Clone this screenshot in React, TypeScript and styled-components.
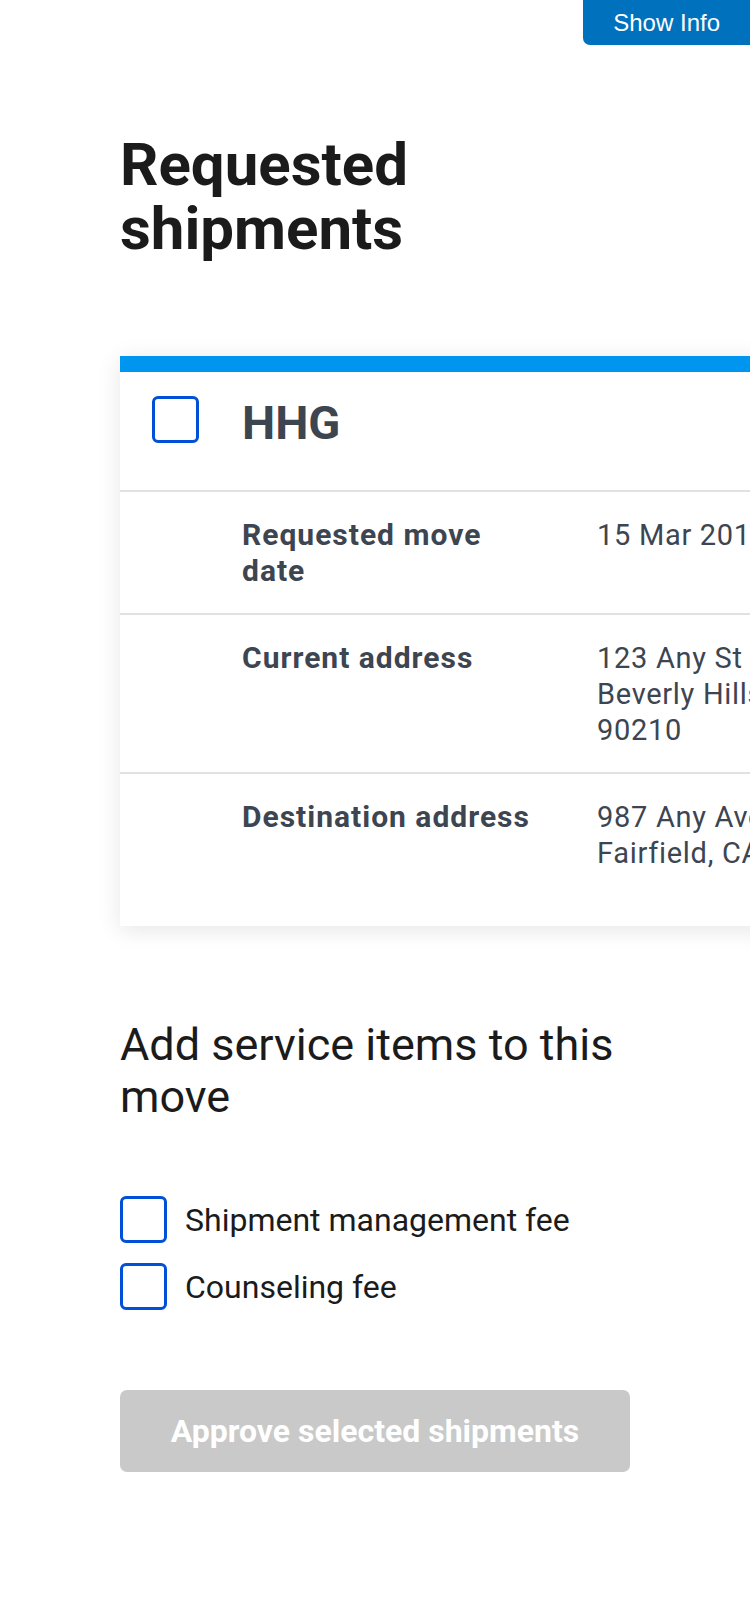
import React from 'react';
import styled, { createGlobalStyle } from 'styled-components';

const GlobalStyle = createGlobalStyle`
    html, body {
        margin: 0;
        padding: 0;
        overflow-x: hidden;
        background: #fff;
    }
    body {
        font-family: Roboto, 'Noto Sans', sans-serif;
        color: #1b1b1b;
    }
`;

const rows = [
    { label: 'Requested move date', lines: ['15 Mar 2018'] },
    { label: 'Current address', lines: ['123 Any St', 'Beverly Hills, CA', '90210'] },
    { label: 'Destination address', lines: ['987 Any Ave', 'Fairfield, CA 94535'] },
];

const serviceItems = ['Shipment management fee', 'Counseling fee'];

const App: React.FC = () => {
    return (
        <>
            <GlobalStyle />
            <InfoButton type="button">Show Info</InfoButton>
            <Page>
                <Title>Requested shipments</Title>
                <Card>
                    <CardHeader>
                        <CheckBox />
                        <ShipmentType>HHG</ShipmentType>
                    </CardHeader>
                    {rows.map((row, i) => (
                        <Row key={i} last={i === rows.length - 1}>
                            <Label>{row.label}</Label>
                            <Value>
                                {row.lines.map((line, j) => (
                                    <div key={j}>{line}</div>
                                ))}
                            </Value>
                        </Row>
                    ))}
                </Card>
                <SubTitle>Add service items to this move</SubTitle>
                <ServiceList>
                    {serviceItems.map((item) => (
                        <ServiceItem key={item}>
                            <CheckBox />
                            <span>{item}</span>
                        </ServiceItem>
                    ))}
                </ServiceList>
                <ApproveButton type="button" disabled>Approve selected shipments</ApproveButton>
            </Page>
        </>
    );
};

const InfoButton = styled.button`
    position: absolute;
    top: 0;
    right: 0;
    height: 45px;
    padding: 0 30px;
    border: none;
    border-bottom-left-radius: 7px;
    background: #0071bc;
    color: #fff;
    font-family: 'Liberation Sans', Arial, sans-serif;
    font-size: 24px;
    line-height: 45px;
    cursor: pointer;
`;

const Page = styled.div`
    width: 510px;
    margin-left: 120px;
    padding: 133px 0 140px;
`;

const Title = styled.h1`
    margin: 0;
    font-size: 60px;
    line-height: 64px;
    font-weight: 700;
    color: #1b1b1b;
`;

const Card = styled.div`
    width: 1000px;
    margin-top: 95px;
    padding-bottom: 31px;
    background: #fff;
    border-top: 16px solid #0096f0;
    box-shadow: 0 4px 22px rgba(0, 0, 0, 0.1);
`;

const CardHeader = styled.div`
    box-sizing: border-box;
    height: 120px;
    display: flex;
    align-items: flex-start;
    gap: 43px;
    padding: 24px 32px 0;
    border-bottom: 2px solid #dfe1e2;
`;

const CheckBox = styled.span`
    box-sizing: border-box;
    flex: none;
    width: 47px;
    height: 47px;
    border: 3px solid #0050d8;
    border-radius: 6px;
    background: #fff;
`;

const ShipmentType = styled.h3`
    margin: 0;
    font-size: 47px;
    line-height: 54px;
    font-weight: 700;
    color: #3d4551;
`;

const Row = styled.div<{ last: boolean }>`
    display: grid;
    grid-template-columns: 298px 1fr;
    column-gap: 57px;
    padding: 25px 0 24px 122px;
    border-bottom: ${({ last }) => (last ? 'none' : '2px solid #dfe1e2')};
    line-height: 36px;
    color: #3d4551;
`;

const Label = styled.div`
    font-size: 30px;
    font-weight: 700;
    letter-spacing: 1px;
`;

const Value = styled.div`
    font-size: 29px;
    font-weight: 400;
    letter-spacing: 0.7px;
    white-space: nowrap;
`;

const SubTitle = styled.h2`
    margin: 93px 0 0;
    font-size: 45px;
    line-height: 52px;
    font-weight: 400;
    color: #1b1b1b;
`;

const ServiceList = styled.div`
    display: flex;
    flex-direction: column;
    gap: 20px;
    margin-top: 73px;
`;

const ServiceItem = styled.label`
    display: flex;
    align-items: center;
    gap: 18px;
    font-size: 32px;
    line-height: 40px;
    color: #1b1b1b;
`;

const ApproveButton = styled.button`
    display: block;
    width: 510px;
    height: 82px;
    margin-top: 80px;
    border: none;
    border-radius: 7px;
    background: #c9c9c9;
    color: #fff;
    font-family: Roboto, 'Noto Sans', sans-serif;
    font-size: 32px;
    font-weight: 700;
`;

export default App;
